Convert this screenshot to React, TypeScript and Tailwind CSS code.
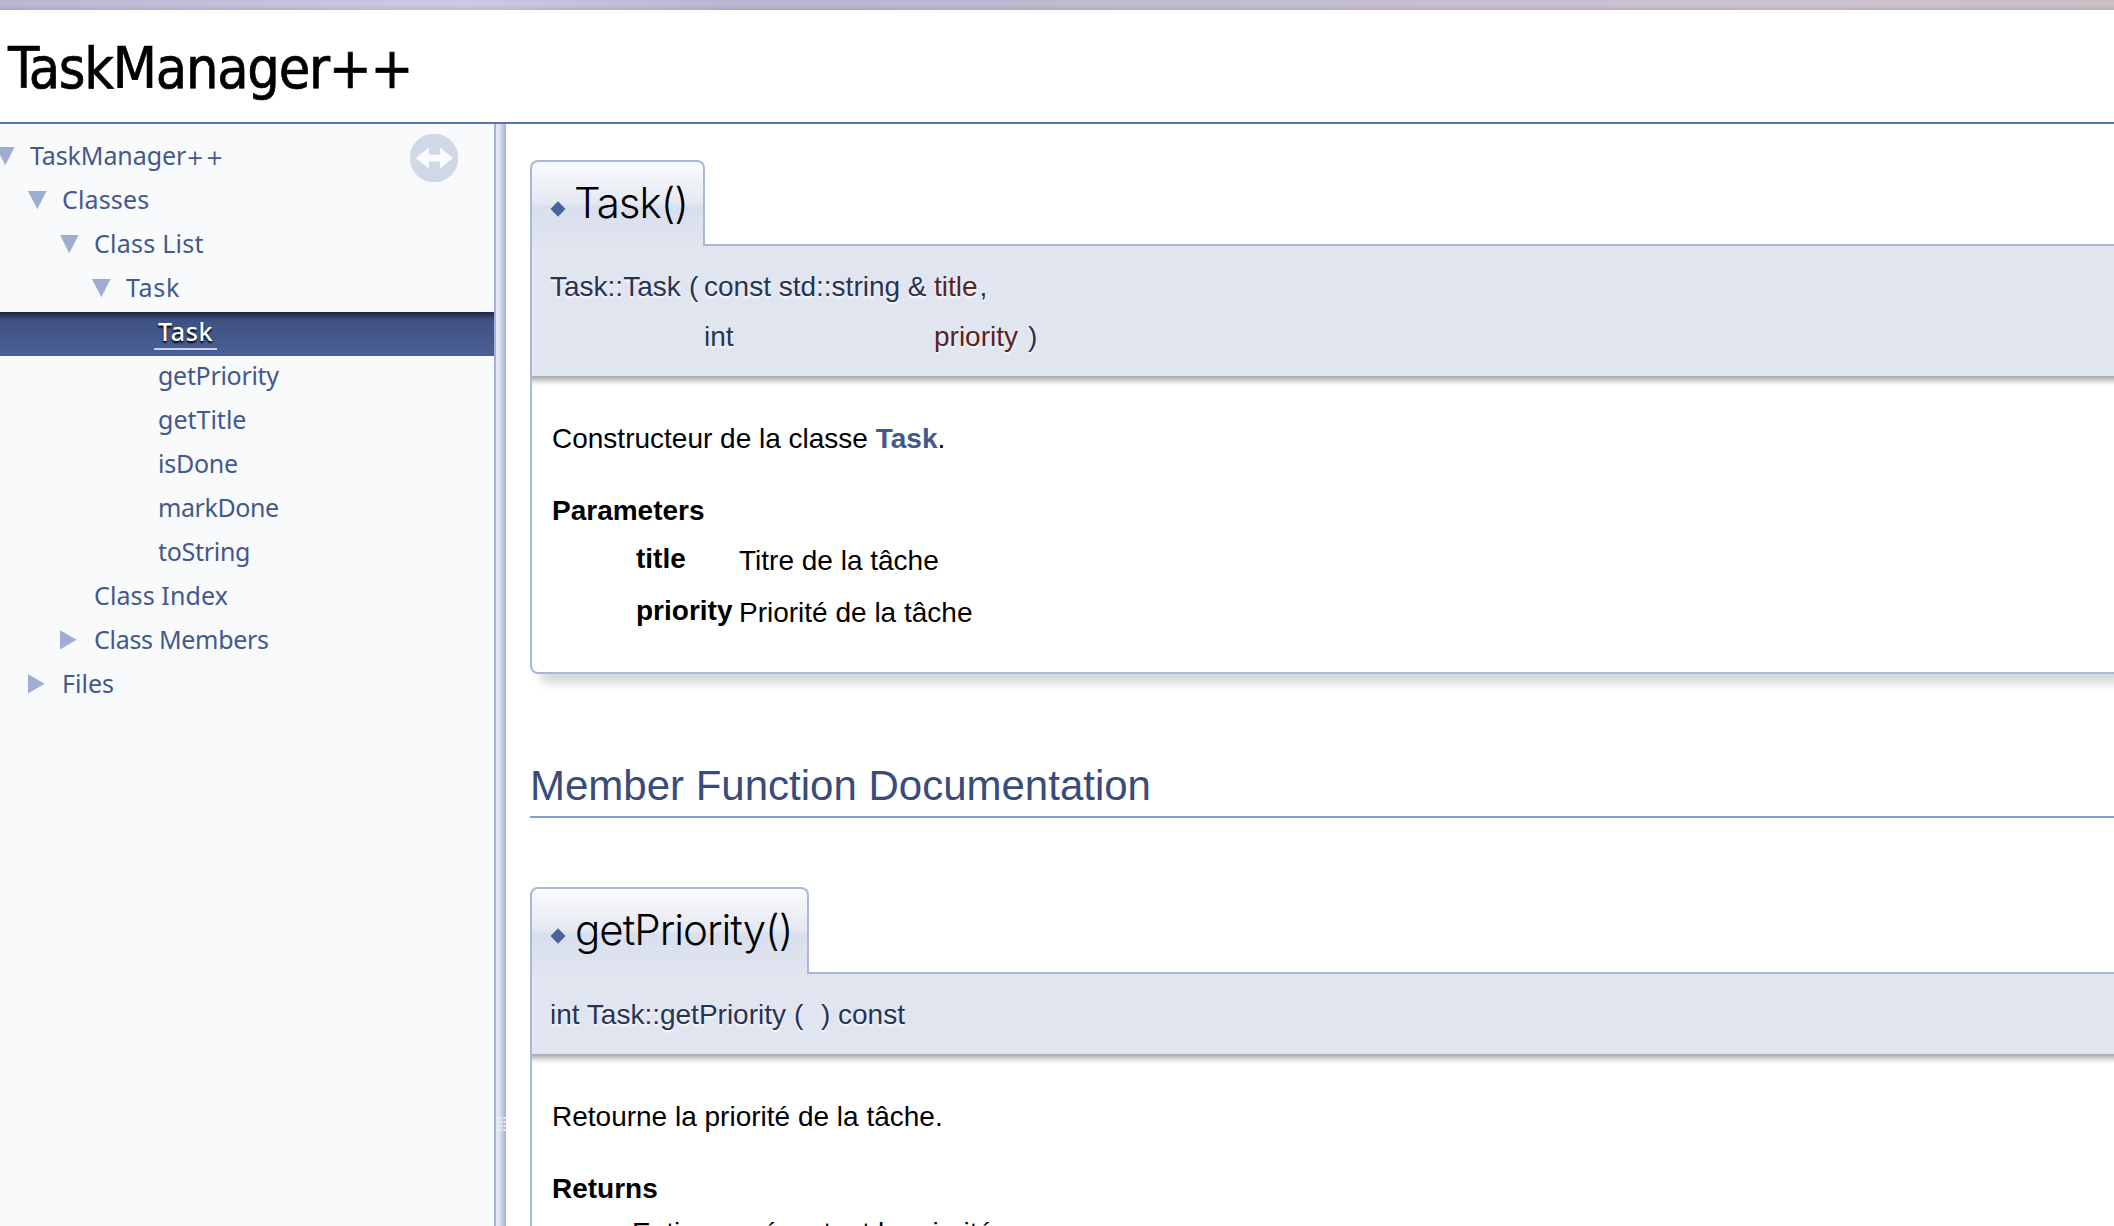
import type { ReactNode } from "react";

type NavItem = {
  label: ReactNode;
  pad: string;
  tracking: string;
  arrow?: "down" | "right";
  selected?: boolean;
};

const navItems: NavItem[] = [
  {
    label: (
      <>
        TaskManager
        <span className="font-['DejaVu_Sans',sans-serif] text-[21px] leading-none tracking-[2px]">++</span>
      </>
    ),
    pad: "pl-[30px]",
    tracking: "tracking-[-0.1px]",
    arrow: "down",
  },
  { label: "Classes", pad: "pl-[62px]", tracking: "tracking-[0.15px]", arrow: "down" },
  { label: "Class List", pad: "pl-[94px]", tracking: "tracking-[0.25px]", arrow: "down" },
  { label: "Task", pad: "pl-[126px]", tracking: "tracking-[0.7px]", arrow: "down" },
  { label: "Task", pad: "pl-[158px]", tracking: "tracking-[0.7px]", selected: true },
  { label: "getPriority", pad: "pl-[158px]", tracking: "tracking-[-0.3px]" },
  { label: "getTitle", pad: "pl-[158px]", tracking: "tracking-[0px]" },
  { label: "isDone", pad: "pl-[158px]", tracking: "tracking-[-0.25px]" },
  { label: "markDone", pad: "pl-[158px]", tracking: "tracking-[-0.4px]" },
  { label: "toString", pad: "pl-[158px]", tracking: "tracking-[-0.3px]" },
  { label: "Class Index", pad: "pl-[94px]", tracking: "tracking-[0.1px]" },
  { label: "Class Members", pad: "pl-[94px]", tracking: "tracking-[-0.3px]", arrow: "right" },
  { label: "Files", pad: "pl-[62px]", tracking: "tracking-[0px]", arrow: "right" },
];

function Arrow({ kind }: { kind: "down" | "right" }) {
  return (
    <svg
      viewBox="0 0 20 20"
      className="-ml-[34px] mr-[14px] mt-[10px] h-5 w-5 shrink-0 overflow-visible fill-[#9fadd3]"
    >
      {kind === "down" ? <path d="M0 1H18.6L9.3 19.3Z" /> : <path d="M0 .2V19.4L16.6 9.8Z" />}
    </svg>
  );
}

function Sidebar() {
  return (
    <nav className="relative w-[494px] shrink-0 bg-[#f9fafc] pt-3 font-['Noto_Sans','Open_Sans',sans-serif] text-[25px] leading-[39px] text-[#43588b]">
      {navItems.map((item, i) => (
        <div
          key={i}
          className={`flex h-11 items-start ${item.pad} ${item.tracking} ${
            item.selected
              ? "bg-[linear-gradient(to_bottom,#1d263f_0px,#2b3859_3px,#3b4c7b_7px,#40528380_10px,transparent_11px),linear-gradient(to_bottom,#3d4f7e,#4a5f96)] font-medium text-white [text-shadow:0_2px_2px_#000]"
              : ""
          }`}
        >
          {item.arrow && <Arrow kind={item.arrow} />}
          {item.selected ? (
            <span className="-ml-1 h-[38px] border-b-2 border-[#c8d0e4] pl-1 pr-1">{item.label}</span>
          ) : (
            <span className="whitespace-nowrap">{item.label}</span>
          )}
        </div>
      ))}
      <svg viewBox="0 0 48 48" className="absolute left-[410px] top-[10px] h-12 w-12">
        <circle cx="24" cy="24" r="24.3" fill="#d0d7e9" />
        <path d="M5.5 24L19 13.5V20.5H30V13.5L43 24L30 34.5V27.5H19V34.5Z" fill="#fafbfd" />
      </svg>
    </nav>
  );
}

function Splitter() {
  return (
    <div className="flex w-3 shrink-0 flex-col border-l-2 border-[#a3b1d6] bg-[linear-gradient(to_right,#e4e8f3,#dfe4f1_30%,#a3b1d5)]">
      <svg viewBox="0 0 10 18" className="mt-[992px] h-[18px] w-[10px]">
        {[1, 5, 9, 13].map((y) =>
          [1, 4.2, 7.6].map((x) => (
            <rect key={`${x}-${y}`} x={x} y={y} width="2" height="2" fill="#eef1f9" />
          ))
        )}
      </svg>
    </div>
  );
}

function MemberTab({ name, tall }: { name: string; tall?: boolean }) {
  return (
    <div
      className={`relative z-10 -mb-0.5 flex rounded-t-lg border-x-2 border-t-2 border-[#a8b8d9] bg-[linear-gradient(to_bottom,#fafbfd_0%,#e6e9f2_47%,#e1e5f0_51%,#d9dfed_53%,#dce1ee_75%,#e1e5f0_100%)] pl-[18px] ${
        tall ? "h-[87px] w-[279px] gap-[9px] leading-[82px]" : "h-[86px] w-[175px] gap-2 leading-[82px]"
      }`}
    >
      <svg viewBox="0 0 16 16" className="mt-[39px] h-4 w-4 fill-[#4a63a0]">
        <path d="M8 0.3L15.5 8L8 15.7L0.5 8Z" />
      </svg>
      <h2 className="font-['Inter','Liberation_Sans',sans-serif] text-[42px] font-light tracking-[-0.98px] leading-[inherit] text-black">
        {name}
      </h2>
    </div>
  );
}

function Prototype({ children }: { children: ReactNode }) {
  return (
    <div className="border-l-2 border-t-2 border-[#a8b8d9] bg-[#e1e5f0] pb-[14px] pl-[18px] pt-4 leading-[50px] text-[#283453] [text-shadow:0_2px_2px_rgba(255,255,255,0.9)]">
      {children}
    </div>
  );
}

function MemberDoc({ className, children }: { className: string; children: ReactNode }) {
  return (
    <div
      className={`rounded-bl-lg border-b-2 border-l-2 border-[#a8b8d9] bg-[linear-gradient(to_bottom,#a6a6a6_0px,#c4c4c4_3px,#e6e6e6_6px,#fafafa_9px,#ffffff_11px)] pl-5 pt-[47px] leading-8 shadow-[10px_10px_10px_rgba(0,0,0,0.15)] ${className}`}
    >
      {children}
    </div>
  );
}

export default function App() {
  return (
    <div className="flex h-[1226px] w-[2114px] flex-col overflow-hidden bg-white font-['Liberation_Sans',Arial,sans-serif] text-[28px] text-black">
      <div className="h-[10px] shrink-0 bg-[linear-gradient(to_bottom,transparent_50%,rgba(60,60,80,0.12)),linear-gradient(to_right,#b9b8d0,#cdcae0_22%,#b9b6cd_35%,#c4bdd0_60%,#cbc4cf_85%,#cbbfc6)]" />
      <header className="h-[114px] shrink-0 border-b-2 border-[#5373b4] pl-2 font-['DejaVu_Sans_Condensed','DejaVu_Sans',sans-serif] text-[57px] font-stretch-condensed leading-[117px] tracking-[-1.25px] [-webkit-text-stroke:0.7px_black]">
        TaskManager++
      </header>

      <div className="flex min-h-0 flex-1">
        <Sidebar />
        <Splitter />

        <main className="min-w-0 flex-1 pl-6 pt-9">
          <section>
            <MemberTab name="Task()" />
            <Prototype>
              <div className="grid grid-cols-[139px_15px_230px_auto] whitespace-pre">
                <span>Task::Task</span>
                <span>(</span>
                <span>const std::string &amp;</span>
                <span>
                  <span className="mr-0.5 text-[#582322]">title</span>,
                </span>
                <span className="col-start-3">int</span>
                <span>
                  <span className="mr-[10px] text-[#582322]">priority</span>)
                </span>
              </div>
            </Prototype>
            <MemberDoc className="h-[298px]">
              <p>
                Constructeur de la classe <b className="text-[#43588b]">Task</b>.
              </p>
              <p className="mt-10 font-bold">Parameters</p>
              <dl className="ml-[84px] mt-4 grid auto-rows-[52px] grid-cols-[103px_auto]">
                <dt className="font-bold">title</dt>
                <dd className="pt-0.5">Titre de la tâche</dd>
                <dt className="font-bold">priority</dt>
                <dd className="pt-0.5">Priorité de la tâche</dd>
              </dl>
            </MemberDoc>
          </section>

          <h1 className="mb-[69px] mt-[88px] h-[56px] border-b-2 border-[#879ecb] text-[42px] leading-[48px] text-[#394c79]">
            Member Function Documentation
          </h1>

          <section>
            <MemberTab name="getPriority()" tall />
            <Prototype>
              <div className="grid grid-cols-[244px_27px_17px_auto] whitespace-pre">
                <span>int Task::getPriority</span>
                <span>(</span>
                <span>)</span>
                <span>const</span>
              </div>
            </Prototype>
            <MemberDoc className="h-[300px]">
              <p>Retourne la priorité de la tâche.</p>
              <p className="mt-10 font-bold">Returns</p>
              <p className="ml-20 mt-3">Entier représentant la priorité.</p>
            </MemberDoc>
          </section>
        </main>
      </div>
    </div>
  );
}
